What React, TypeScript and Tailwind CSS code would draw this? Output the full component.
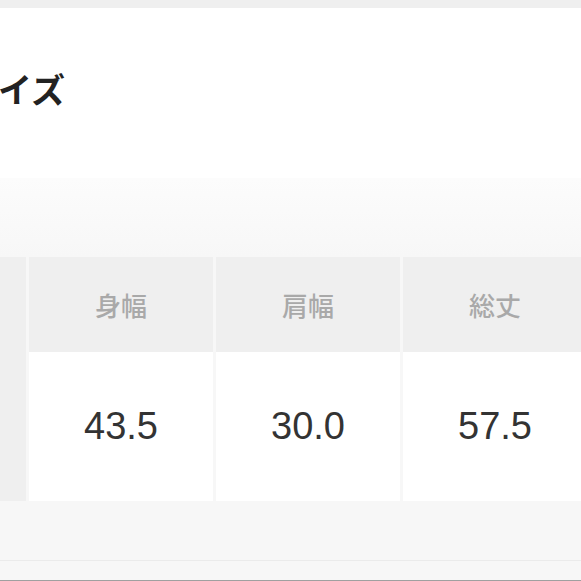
import React from 'react';

const cols = [
  { label: '身幅', value: '43.5' },
  { label: '肩幅', value: '30.0' },
  { label: '総丈', value: '57.5' },
];

const App = () => {
  return (
    <div
      className="w-[581px] h-[581px] overflow-hidden bg-[#f7f7f7] flex flex-col"
      style={{ fontFamily: '"Liberation Sans", "Noto Sans CJK JP", sans-serif' }}
    >
      <div className="h-[8px] bg-[#efefef]" />
      <div className="h-[170px] bg-white pt-[60px]">
        <h2 className="-ml-[36px] text-[34px] leading-[42px] font-bold text-[#222] whitespace-nowrap font-['Noto_Sans_CJK_JP',sans-serif]">
          サイズ
        </h2>
      </div>
      <div className="h-[79px] bg-gradient-to-b from-[#fcfcfc] to-[#f7f7f7]" />
      <div className="grid grid-cols-[26px_184px_184px_184px] grid-rows-[95px_149px] gap-x-[3px]">
        <div className="bg-[#efefef]" />
        {cols.map((c) => (
          <div
            key={c.label}
            className="bg-[#efefef] flex items-center justify-center text-[26px] font-medium text-[#a9a9a9] font-['Noto_Sans_CJK_JP',sans-serif]"
          >
            {c.label}
          </div>
        ))}
        <div className="bg-[#efefef]" />
        {cols.map((c) => (
          <div
            key={c.value}
            className="bg-white flex items-center justify-center text-[38px] text-[#333]"
          >
            {c.value}
          </div>
        ))}
      </div>
      <div className="h-[59px]" />
      <div className="h-px bg-[#ebebeb]" />
      <div className="h-[19px]" />
      <div className="h-px bg-[#a0a0a0]" />
    </div>
  );
};

export default App;
